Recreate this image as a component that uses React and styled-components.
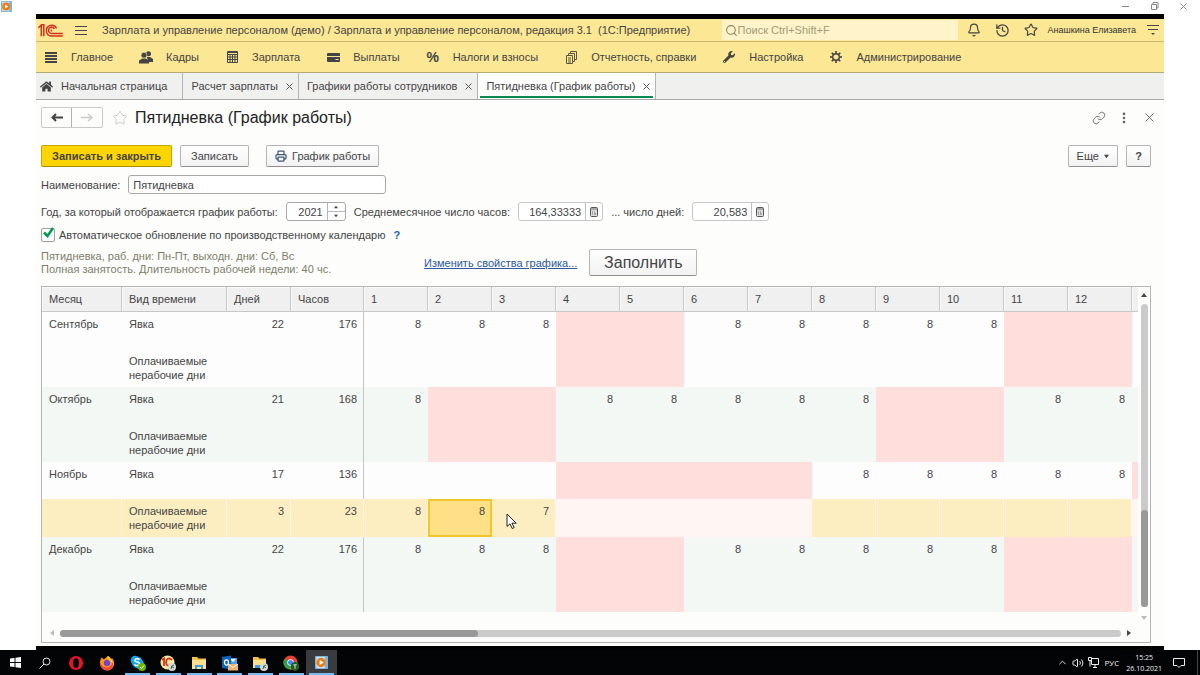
import React from "react";
import styled, { createGlobalStyle } from "styled-components";
import { Bell, History, Star, Link as LinkIcon, Search, X, MoreVertical, Printer, Volume2, ChevronUp } from "lucide-react";
import { FaWrench, FaHome } from "react-icons/fa";

const GlobalStyle = createGlobalStyle`
  * { box-sizing: border-box; }
  body {
    margin: 0;
    background: #fff;
    color: #444;
    font: 11px/14px "Liberation Sans", Arial, sans-serif;
  }
  button, input { font: inherit; color: inherit; }
  button { padding: 0; border: 0; background: none; cursor: pointer; }
  svg { display: block; flex: none; }
`;

const Screen = styled.div`
  display: flex;
  flex-direction: column;
  min-height: 100vh;
`;

const PlayerBar = styled.header`
  display: flex;
  align-items: center;
  justify-content: space-between;
  height: 14px;
  padding: 0 12px 1px 1px;
`;

const WindowButtons = styled.div`
  display: flex;
  gap: 20px;
  color: #888;
`;

const AppWindow = styled.div`
  display: flex;
  flex: 1;
  flex-direction: column;
  margin: 0 36px;
  border-top: 5px solid #000;
  border-bottom: 4px solid #000;
  background: #fdfdfb;
`;

const TitleBar = styled.div`
  display: flex;
  align-items: center;
  height: 23px;
  padding: 0 5px 0 2px;
  border-bottom: 1px solid #c9b673;
  background: #fce794;
`;

const AppTitle = styled.div`
  flex: 1;
  margin-left: 15px;
  white-space: nowrap;
`;

const MenuButton = styled.button`
  margin-left: ${(p) => p.$gap}px;
`;

const SearchBox = styled.label`
  display: flex;
  align-items: center;
  width: 236px;
  height: 20px;
  padding-left: 3px;
  background: #fef3c9;
  color: #8d8562;
  input {
    flex: 1;
    min-width: 0;
    padding: 0;
    border: 0;
    background: none;
    outline: 0;
  }
  input::placeholder { color: #a39b78; opacity: 1; }
`;

const HeaderTools = styled.div`
  display: flex;
  align-items: center;
  gap: 14px;
  margin-left: 9px;
`;

const UserName = styled.span`
  margin-left: 10px;
  font-size: 9px;
  color: #333;
  white-space: nowrap;
`;

const Sections = styled.nav`
  display: flex;
  align-items: center;
  gap: 27px;
  height: 31px;
  padding: 0 9px;
  border-bottom: 1px solid #b5a977;
  background: #fce794;
`;

const Section = styled.a`
  display: flex;
  align-items: center;
  gap: 14px;
  color: #444;
  text-decoration: none;
  white-space: nowrap;
`;

const IconSlot = styled.span`
  display: flex;
  justify-content: center;
  width: 12px;
  font-size: 14px;
  font-weight: bold;
`;

const Tabs = styled.div`
  display: flex;
  height: 27px;
  border-bottom: 1px solid #a9a9a9;
  background: #f0f0ef;
`;

const Tab = styled.div`
  display: flex;
  align-items: center;
  gap: 8px;
  padding: 0 ${(p) => (p.$home ? 15 : 5)}px 0 ${(p) => (p.$home ? 4 : 8)}px;
  border-right: 1px solid #b4b4b4;
  white-space: nowrap;
  ${(p) => p.$active && "background: linear-gradient(#0a8a50, #0a8a50) center 23px / calc(100% - 4px) 2px no-repeat #fff;"}
`;

const Form = styled.main`
  display: flex;
  flex: 1;
  flex-direction: column;
  padding: 7px 13px 3px 5px;
`;

const FormHeader = styled.div`
  display: flex;
  align-items: center;
  height: 21px;
  margin: 0 -6px 17px 0;
`;

const NavGroup = styled.div`
  display: flex;
  height: 21px;
  border: 1px solid #c9c9c9;
  border-radius: 2px;
`;

const NavButton = styled.button`
  display: flex;
  align-items: center;
  justify-content: center;
  width: 30px;
  color: ${(p) => (p.disabled ? "#ccc" : "#444")};
  border-right: ${(p) => (p.disabled ? 0 : 1)}px solid #b0b0b0;
`;

const FormTitle = styled.h1`
  flex: 1;
  margin: 0 0 0 7px;
  font-size: 16px;
  font-weight: normal;
  line-height: 20px;
  color: #222;
`;

const FormTools = styled.div`
  display: flex;
  align-items: center;
  gap: 11px;
  color: #666;
`;

const Row = styled.div`
  display: flex;
  align-items: center;
  gap: 8px;
  min-height: ${(p) => p.$height}px;
  margin-bottom: ${(p) => p.$after}px;
  white-space: nowrap;
`;

const Button = styled.button`
  display: flex;
  align-items: center;
  justify-content: center;
  gap: 5px;
  height: ${(p) => (p.$large ? 27 : 22)}px;
  min-width: ${(p) => p.$min || 0}px;
  padding: 0 ${(p) => (p.$narrow ? 8 : 10)}px;
  border: 1px solid ${(p) => (p.$primary ? "#c9a500" : "#b4b4b4")};
  border-bottom-color: ${(p) => (p.$primary ? "#a88a00" : "#8f8f8f")};
  border-radius: 2px;
  background: ${(p) => (p.$primary ? "#fed500" : "linear-gradient(#fff, #f2f2f2)")};
  font-size: ${(p) => (p.$large ? 16 : 11)}px;
  font-weight: ${(p) => (p.$primary || p.$strong ? "bold" : "normal")};
`;

const Spacer = styled.div`
  width: ${(p) => p.$width || 0}px;
  flex: ${(p) => (p.$width ? "none" : 1)};
`;

const Field = styled.div`
  display: flex;
  width: ${(p) => p.$width}px;
  height: 19px;
  border: 1px solid ${(p) => (p.$readOnly ? "#c8c8c8" : "#a8a8a8")};
  border-radius: 3px;
  background: #fff;
  overflow: hidden;
  input {
    flex: 1;
    min-width: 0;
    padding: 0 4px;
    border: 0;
    outline: 0;
    background: none;
    text-align: ${(p) => (p.$number ? "right" : "left")};
  }
`;

const FieldButton = styled.button`
  display: flex;
  align-items: center;
  justify-content: center;
  width: 17px;
  border-left: 1px solid #c0c0c0;
`;

const Stepper = styled.div`
  display: flex;
  flex-direction: column;
  width: 18px;
  border-left: 1px solid #b4b4b4;
  button {
    display: flex;
    flex: 1;
    align-items: center;
    justify-content: center;
  }
  button + button { border-top: 1px solid #b4b4b4; }
`;

const CheckLabel = styled.label`
  display: flex;
  align-items: center;
  gap: 4px;
`;

const Checkbox = styled.input`
  appearance: none;
  width: 14px;
  height: 14px;
  margin: 0;
  border: 1px solid #a0a0a0;
  border-radius: 2px;
  background: #fff;
`;

const CheckWrap = styled.span`
  position: relative;
  display: flex;
  svg {
    position: absolute;
    left: 1px;
    top: -2px;
    pointer-events: none;
  }
`;

const HelpLink = styled.a`
  color: #1666b0;
  font-weight: bold;
  text-decoration: none;
`;

const Summary = styled.p`
  width: 375px;
  margin: 0;
  line-height: 13px;
  color: #7d7d6c;
`;

const PropertiesLink = styled.a`
  margin-right: 4px;
  color: #2c5a9c;
`;

const Grid = styled.section`
  display: flex;
  flex: 1;
  flex-direction: column;
  border: 1px solid #b5b5b5;
`;

const GridBody = styled.div`
  display: flex;
  flex: 1;
`;

const TableViewport = styled.div`
  flex: 1;
  min-width: 0;
  overflow: hidden;
`;

const Table = styled.table`
  width: 1154px;
  table-layout: fixed;
  border-collapse: separate;
  border-spacing: 0;
`;

const HeadCell = styled.th`
  width: ${(p) => p.$width}px;
  height: 25px;
  padding: 0 7px;
  border-right: 1px solid #c6c6c6;
  border-bottom: 1px solid #c6c6c6;
  background: #f0f0f0;
  box-shadow: inset 1px 1px #fafafa;
  font-weight: normal;
  text-align: left;
`;

const fills = {
  plain: "#fdfdfd",
  alt: "#f4f8f4",
  off: "#ffdedb",
  selected: "#fdeec2",
  offSelected: "#fff5f3",
  current: "#fee087",
};

const outlines = {
  selected: "inset -1px 0 #fff8e6",
  current: "inset 0 0 0 2px #f2c52d",
};

const Cell = styled.td`
  position: relative;
  height: ${(p) => (p.$second ? 38 : 37)}px;
  padding: 5px 7px 0;
  background: ${(p) => fills[p.$fill]};
  box-shadow: ${(p) => (p.$divider ? "inset -1px 0 #c6c6c6" : outlines[p.$fill] || "none")};
  text-align: ${(p) => (p.$number ? "right" : "left")};
  vertical-align: top;
`;

const Pointer = styled.svg`
  position: absolute;
  left: 14px;
  top: 14px;
`;

const VerticalScroll = styled.div`
  display: flex;
  flex-direction: column;
  align-items: center;
  width: 12px;
  padding: 5px 0 3px;
`;

const VerticalTrack = styled.div`
  display: flex;
  flex: 1;
  flex-direction: column;
  justify-content: flex-end;
  width: 7px;
  margin: 6px 0 8px;
  border-radius: 4px;
  background: #cacaca;
`;

const VerticalThumb = styled.div`
  height: 32%;
  border-radius: 4px;
  background: #999;
`;

const HorizontalScroll = styled.div`
  display: flex;
  align-items: center;
  gap: 5px;
  height: 18px;
  padding: 0 18px 0 7px;
`;

const HorizontalTrack = styled.div`
  flex: 1;
  height: 7px;
  border-radius: 4px;
  background: #cacaca;
`;

const HorizontalThumb = styled.div`
  width: 39.4%;
  height: 7px;
  border-radius: 4px;
  background: #999;
`;

const TaskBar = styled.footer`
  display: flex;
  height: 25px;
  background: #030406;
  color: #eee;
`;

const SystemButton = styled.button`
  display: flex;
  align-items: center;
  justify-content: center;
  width: 30px;
`;

const TaskList = styled.div`
  display: flex;
  width: 276px;
  margin-left: 1px;
`;

const Task = styled.button`
  display: flex;
  flex: 1;
  align-items: center;
  justify-content: center;
  background:
    ${(p) => (p.$open ? "linear-gradient(#76b9ed, #76b9ed) center bottom / 25px 2px no-repeat" : "none")}
    ${(p) => (p.$active ? "#393b3e" : "transparent")};
`;

const Tray = styled.div`
  display: flex;
  align-items: center;
  gap: 4px;
  margin: 0 2px 0 auto;
  padding-right: 12px;
  border-right: 1px solid #44474a;
  font: 8px/11px "Open Sans", sans-serif;
`;

const Language = styled.span`
  margin: 0 3px 0 2px;
`;

const Clock = styled.time`
  margin-right: 7px;
  font-size: 7px;
  text-align: center;
`;

function Lines({ size = 12, count = 3, gap = 4, weight = 1 }) {
  return (
    <svg width={size} height={(count - 1) * gap + weight} stroke="#444" strokeWidth={weight}>
      {Array.from({ length: count }, (_, i) => (
        <path key={i} d={`M0 ${i * gap + weight / 2}h${size}`} />
      ))}
    </svg>
  );
}

function Logo() {
  return (
    <svg width="25" height="13" viewBox="0 0 25 13" fill="none" stroke="#d2301f" strokeWidth="1.5">
      <path d="M.3 3.800 3.300 1.200v11M2.800.8h3v11.400" />
      <path d="M18.500 4.500A5.300 5.300 0 1 0 13.300 12h11.500" />
      <path d="M16.300 5A3.100 3.100 0 1 0 13.300 9.500h11.500" />
      <circle cx="13.400" cy="6.500" r=".9" fill="#d2301f" stroke="none" />
    </svg>
  );
}

function PeopleIcon() {
  return (
    <svg width="14" height="13" viewBox="0 0 14 13" fill="#444">
      <circle cx="9.500" cy="2.800" r="2.500" />
      <path d="M8 6h3l3 2v3H9z" />
      <circle cx="5" cy="4.200" r="2.900" stroke="#fce794" strokeWidth=".6" />
      <path d="M0 12.500V9.500L3.500 7.500h3L10 9.500v3z" />
    </svg>
  );
}

function CalculatorIcon() {
  return (
    <svg width="11" height="12" viewBox="0 0 11 12" fill="none" stroke="#444">
      <path d="M.5.5h10v11H.5zM.5 1.500h10M.5 3.500h10M.5 6h10M.5 8.500h10M3 3v9M5.500 3v9M8 3v9" />
    </svg>
  );
}

function CardIcon() {
  return (
    <svg width="13" height="9" viewBox="0 0 13 9">
      <rect width="13" height="9" rx="1" fill="#444" />
      <path d="M0 3.500h13" stroke="#fce794" />
      <path d="M8.500 6.500h3" stroke="#fce794" />
    </svg>
  );
}

function ReportsIcon() {
  return (
    <svg width="11" height="13" viewBox="0 0 11 13" fill="none" stroke="#5b5440">
      <path d="M4.500 2.500V.5h6v8H9M2.500 4.500v-2H8.500v8H7M.5 4.500h6v8h-6zM2 7h3M2 9h3M2 11h3" />
    </svg>
  );
}

function GearIcon() {
  return (
    <svg width="12" height="12" viewBox="-6 -6 12 12" fill="none" stroke="#444">
      <circle r="3.300" strokeWidth="1.400" />
      {[0, 45, 90, 135, 180, 225, 270, 315].map((angle) => (
        <path key={angle} d="M0-3.800V-6" strokeWidth="1.700" transform={`rotate(${angle})`} />
      ))}
    </svg>
  );
}

function ArrowIcon({ flip }) {
  return (
    <svg width="12" height="9" viewBox="0 0 12 9" fill="none" stroke="currentColor" strokeWidth={flip ? 1.5 : 2}>
      <path d={flip ? "M0 4.500h10.500M7 1l3.800 3.500L7 8" : "M12 4.500H1.500M5 1 1.500 4.500 5 8"} />
    </svg>
  );
}

function FieldCalculator() {
  return (
    <svg width="8" height="10" viewBox="0 0 8 10" fill="none" stroke="#555">
      <rect x=".5" y=".5" width="7" height="9" rx="1" fill="#ddd" />
      <path d="M1 2h6M2 5h1M4 5h1M2 7h1M4 7h2" strokeWidth=".8" />
    </svg>
  );
}

const triangles = {
  up: "M0 5 3 1l3 4z",
  down: "M0 1h6L3 5z",
  left: "M5 0v6L1 3z",
  right: "M1 0v6l4-3z",
};

function Triangle({ dir, color = "#444", size = 6 }) {
  return (
    <svg width={size} height={size} viewBox="0 0 6 6" fill={color}>
      <path d={triangles[dir]} />
    </svg>
  );
}

function PlayerIcon({ size = 11 }) {
  return (
    <svg width={size} height={size} viewBox="0 0 14 14">
      <rect width="14" height="14" rx="1" fill="#7db4dc" />
      <rect x="1.500" y="1" width="9" height="12" fill="#cfe3f2" />
      <circle cx="6.500" cy="7" r="5" fill="#ee7d12" />
      <path d="M5 4.300v5.400L9.500 7z" fill="#fff" />
    </svg>
  );
}

function Badge({ color, children }) {
  return (
    <>
      <circle cx="12" cy="12" r="4" fill={color} />
      {children}
    </>
  );
}

function TaskIcon({ name }) {
  const art = {
    opera: (
      <path fillRule="evenodd" fill="#e5132b" d="M8 1a7 7 0 1 0 0 14A7 7 0 0 0 8 1zm0 2c1.900 0 3 2.300 3 5s-1.100 5-3 5-3-2.300-3-5 1.100-5 3-5z" />
    ),
    firefox: (
      <>
        <path fill="#ff9a1f" d="M1 8c0-3 1-4 1.500-5.500L5 4.500C6 2.500 8 3 8.500 1 10 1 11 3 11.500 4.500L13 3c2 2 2.500 5 2 7-1 3.500-4 5.500-7 5.500S1 12 1 8z" />
        <path fill="#f5433e" d="M1 7c1 2 2 5.500 6.500 5.500S13 9 13.500 7c1.500 4-1 8.300-5.500 8.300S.5 11.500 1 7z" />
        <circle cx="8" cy="8" r="3.200" fill="#7445c9" />
        <path fill="#ffcf3a" d="M9 1c2 1 4 3.500 4.200 6.500L10.500 6C10 4 8.500 3 9 1z" />
      </>
    ),
    skype: (
      <>
        <circle cx="5" cy="5" r="4.300" fill="#12a5e8" />
        <circle cx="9" cy="9" r="5" fill="#12a5e8" />
        <circle cx="7" cy="7" r="5.500" fill="#12a5e8" />
        <path d="M9.500 4.800C8.500 3.300 4.800 3.400 4.800 5.400c0 2.100 4.900 1.300 4.900 3.500 0 2-4.100 2.200-5.200.4" fill="none" stroke="#fff" strokeWidth="1.600" />
        <Badge color="#6bb700"><path d="m10 12 1.500 1.500 2.500-3" fill="none" stroke="#fff" /></Badge>
      </>
    ),
    onec: (
      <>
        <circle cx="7.500" cy="7.500" r="7" fill="#fbe9a0" />
        <path d="m2 5 2-1.500V11M12 5C9 2 6 4 6 7.500S8.500 11 12 10.500" fill="none" stroke="#d9311f" strokeWidth="1.800" />
        <Badge color="#d5d8d5"><path d="m11 14 1-3 2-1M11 11l3 2" stroke="#3d6b45" fill="none" /></Badge>
      </>
    ),
    folder: (
      <>
        <path d="M1 2h5l1.500 1.500H15V14H1z" fill="#f2c14e" />
        <path d="M1 5h14v9H1z" fill="#fde08d" />
        <path d="M4 14v-4h8v4h-2v-2H6v2z" fill="#3f9be0" />
      </>
    ),
    outlook: (
      <>
        <path d="M7 3h8v8H7z" fill="#4ea0e6" />
        <path d="M8 4h6l-3 3z" fill="#fff" />
        <path d="m0 2 9-1.500v14L0 13z" fill="#0b64b8" />
        <ellipse cx="4.500" cy="7.500" rx="2" ry="2.600" fill="none" stroke="#fff" strokeWidth="1.300" />
        <path d="M6 9h10v6.500H6z" fill="#f5b06b" />
        <path d="m6 9 5 3.500L16 9" fill="none" stroke="#fff" />
      </>
    ),
    folder2: (
      <>
        <path d="M1 2h5l1.500 1.500H14V13H1z" fill="#f2c14e" />
        <path d="M1 5h13v8H1z" fill="#fde08d" />
        <path d="M3 13v-3h6v3z" fill="#3f9be0" />
        <Badge color="#d5d8d5"><path d="m11 14 1-3 2-1M11 11l3 2" stroke="#3d6b45" fill="none" /></Badge>
      </>
    ),
    chrome: (
      <>
        <circle cx="7.500" cy="7.500" r="7" fill="#e34133" />
        <path d="M7.500 7.500 1.400 4A7 7 0 0 0 7.500 14.500z" fill="#2ba24c" />
        <path d="M7.500 7.500h7a7 7 0 0 1-7 7z" fill="#fbc116" />
        <circle cx="7.500" cy="7.500" r="3.200" fill="#fff" />
        <circle cx="7.500" cy="7.500" r="2.500" fill="#4285f4" />
        <circle cx="12" cy="11.500" r="4.400" fill="#1d5c2a" />
        <path d="M10.300 9.800h3.400M12 9.800v4" stroke="#cfe0cf" />
      </>
    ),
  };
  return <svg width="16" height="16" viewBox="0 0 16 16">{art[name]}</svg>;
}

const sections = [
  ["Главное", <Lines count={4} gap={3} weight={2} />],
  ["Кадры", <PeopleIcon />],
  ["Зарплата", <CalculatorIcon />],
  ["Выплаты", <CardIcon />],
  ["Налоги и взносы", "%"],
  ["Отчетность, справки", <ReportsIcon />],
  ["Настройка", <FaWrench size={12} />],
  ["Администрирование", <GearIcon />],
];

const tabs = ["Расчет зарплаты", "Графики работы сотрудников", "Пятидневка (График работы)"];

const columns = [["Месяц", 80], ["Вид времени", 105], ["Дней", 64], ["Часов", 73]];
const days = Array.from({ length: 13 }, (_, i) => i + 1);

const months = [
  { name: "Сентябрь", total: [22, 176], work: [1, 2, 3, 6, 7, 8, 9, 10], off: [4, 5, 11, 12] },
  { name: "Октябрь", total: [21, 168], work: [1, 4, 5, 6, 7, 8, 11, 12], off: [2, 3, 9, 10], alt: true },
  {
    name: "Ноябрь",
    total: [17, 136],
    work: [8, 9, 10, 11, 12],
    off: [4, 5, 6, 7, 13],
    paid: { total: [3, 23], hours: { 1: 8, 2: 8, 3: 7 }, current: 2, pointer: 3 },
  },
  { name: "Декабрь", total: [22, 176], work: [1, 2, 3, 6, 7, 8, 9, 10], off: [4, 5, 11, 12], alt: true },
];

function MonthRows({ month }) {
  const base = month.alt ? "alt" : "plain";
  const paid = month.paid;
  const paidBase = paid ? "selected" : base;
  const paidFill = (day) => {
    if (paid && paid.current === day) return "current";
    if (month.off.includes(day)) return paid ? "offSelected" : "off";
    return paidBase;
  };
  return (
    <tbody>
      <tr>
        <Cell $fill={base}>{month.name}</Cell>
        <Cell $fill={base}>Явка</Cell>
        <Cell $fill={base} $number>{month.total[0]}</Cell>
        <Cell $fill={base} $number $divider>{month.total[1]}</Cell>
        {days.map((day) => (
          <Cell key={day} $number $fill={month.off.includes(day) ? "off" : base}>
            {month.work.includes(day) ? 8 : null}
          </Cell>
        ))}
      </tr>
      <tr>
        <Cell $second $fill={paidBase} />
        <Cell $second $fill={paidBase}>Оплачиваемые нерабочие дни</Cell>
        <Cell $second $fill={paidBase} $number>{paid?.total[0]}</Cell>
        <Cell $second $fill={paidBase} $number $divider={!paid}>{paid?.total[1]}</Cell>
        {days.map((day) => (
          <Cell key={day} $second $number $fill={paidFill(day)}>
            {paid?.hours[day]}
            {paid?.pointer === day && (
              <Pointer width="12" height="17" viewBox="0 0 12 17" fill="#fff" stroke="#222">
                <path d="M1 1v12.500l3-2.700 2.200 4.700 2-.9L6 10.200h4.200z" />
              </Pointer>
            )}
          </Cell>
        ))}
      </tr>
    </tbody>
  );
}

export default function App() {
  return (
    <Screen>
      <GlobalStyle />
      <PlayerBar>
        <PlayerIcon />
        <WindowButtons>
          <button aria-label="Свернуть"><svg width="9" height="9" stroke="currentColor"><path d="M1 4.500h7" /></svg></button>
          <button aria-label="Восстановить"><svg width="9" height="9" fill="none" stroke="currentColor"><path d="M1.500 2.500h5v5h-5zM3 2V.5h5V6H7" /></svg></button>
          <button aria-label="Закрыть"><svg width="9" height="9" stroke="currentColor"><path d="m1.500 1.500 6 6m0-6-6 6" /></svg></button>
        </WindowButtons>
      </PlayerBar>

      <AppWindow>
        <TitleBar>
          <Logo />
          <MenuButton $gap={12} aria-label="Меню"><Lines /></MenuButton>
          <AppTitle>Зарплата и управление персоналом (демо) / Зарплата и управление персоналом, редакция 3.1&nbsp; (1С:Предприятие)</AppTitle>
          <SearchBox>
            <Search size={13} strokeWidth={2} />
            <input aria-label="Поиск" placeholder="Поиск Ctrl+Shift+F" />
          </SearchBox>
          <HeaderTools>
            <button aria-label="Уведомления"><Bell size={14} color="#444" /></button>
            <button aria-label="История"><History size={15} color="#444" /></button>
            <button aria-label="Избранное"><Star size={14} color="#444" /></button>
          </HeaderTools>
          <UserName>Анашкина Елизавета</UserName>
          <MenuButton $gap={11} aria-label="Настройки окна">
            <svg width="12" height="12" stroke="#444"><path d="M0 1.500h12M1 5.500h10" /><path d="M4 9h4l-2 2z" fill="#444" stroke="none" /></svg>
          </MenuButton>
        </TitleBar>

        <Sections>
          {sections.map(([label, icon]) => (
            <Section key={label} href="#">
              <IconSlot>{icon}</IconSlot>
              {label}
            </Section>
          ))}
        </Sections>

        <Tabs>
          <Tab $home><FaHome size={13} />Начальная страница</Tab>
          {tabs.map((label, i) => (
            <Tab key={label} $active={i === 2}>
              {label}
              <button aria-label="Закрыть вкладку"><svg width="7" height="7" stroke="#555"><path d="m.5.5 6 6m0-6-6 6" /></svg></button>
            </Tab>
          ))}
        </Tabs>

        <Form>
          <FormHeader>
            <NavGroup>
              <NavButton aria-label="Назад"><ArrowIcon /></NavButton>
              <NavButton aria-label="Вперед" disabled><ArrowIcon flip /></NavButton>
            </NavGroup>
            <MenuButton $gap={9} aria-label="В избранное"><Star size={16} strokeWidth={1.5} color="#ccc" /></MenuButton>
            <FormTitle>Пятидневка (График работы)</FormTitle>
            <FormTools>
              <button aria-label="Ссылка"><LinkIcon size={14} strokeWidth={1.5} /></button>
              <button aria-label="Действия"><MoreVertical size={14} strokeWidth={2.5} /></button>
              <button aria-label="Закрыть"><X size={15} strokeWidth={1.5} /></button>
            </FormTools>
          </FormHeader>

          <Row $height={22} $after={8}>
            <Button $primary>Записать и закрыть</Button>
            <Button>Записать</Button>
            <Spacer $width={1} />
            <Button $narrow><Printer size={12} strokeWidth={2.5} color="#3c5a78" />График работы</Button>
            <Spacer />
            <Button $narrow>Еще<Triangle dir="down" size={5} /></Button>
            <Button $narrow $strong $min={25}>?</Button>
          </Row>

          <Row $height={19} $after={8}>
            <label htmlFor="name">Наименование:</label>
            <Field $width={258}><input id="name" defaultValue="Пятидневка" /></Field>
          </Row>

          <Row $height={19} $after={7}>
            <label htmlFor="year">Год, за который отображается график работы:</label>
            <Field $width={60} $number>
              <input id="year" defaultValue="2021" />
              <Stepper>
                <button aria-label="Больше"><Triangle dir="up" size={4} /></button>
                <button aria-label="Меньше"><Triangle dir="down" size={4} /></button>
              </Stepper>
            </Field>
            <label htmlFor="hours">Среднемесячное число часов:</label>
            <Field $width={85} $number $readOnly>
              <input id="hours" defaultValue="164,33333" />
              <FieldButton aria-label="Калькулятор часов"><FieldCalculator /></FieldButton>
            </Field>
            <label htmlFor="days">... число дней:</label>
            <Field $width={77} $number $readOnly>
              <input id="days" defaultValue="20,583" />
              <FieldButton aria-label="Калькулятор дней"><FieldCalculator /></FieldButton>
            </Field>
          </Row>

          <Row $height={14} $after={7}>
            <CheckLabel>
              <CheckWrap>
                <Checkbox type="checkbox" defaultChecked />
                <svg width="13" height="13" fill="none" stroke="#009a55" strokeWidth="2.500"><path d="m2 6.500 3.500 3.500L11 2" /></svg>
              </CheckWrap>
              Автоматическое обновление по производственному календарю
            </CheckLabel>
            <HelpLink href="#">?</HelpLink>
          </Row>

          <Row $height={27} $after={10}>
            <Summary>
              Пятидневка, раб. дни: Пн-Пт, выходн. дни: Сб, Вс<br />
              Полная занятость. Длительность рабочей недели: 40 чс.
            </Summary>
            <PropertiesLink href="#">Изменить свойства графика...</PropertiesLink>
            <Button $large $min={108}>Заполнить</Button>
          </Row>

          <Grid>
            <GridBody>
              <TableViewport>
                <Table>
                  <thead>
                    <tr>
                      {columns.map(([label, width]) => <HeadCell key={label} $width={width}>{label}</HeadCell>)}
                      {days.map((day) => <HeadCell key={day} $width={64}>{day < 13 ? day : null}</HeadCell>)}
                    </tr>
                  </thead>
                  {months.map((month) => <MonthRows key={month.name} month={month} />)}
                </Table>
              </TableViewport>
              <VerticalScroll>
                <Triangle dir="up" />
                <VerticalTrack><VerticalThumb /></VerticalTrack>
                <Triangle dir="down" color="#bbb" />
              </VerticalScroll>
            </GridBody>
            <HorizontalScroll>
              <Triangle dir="left" color="#bbb" />
              <HorizontalTrack><HorizontalThumb /></HorizontalTrack>
              <Triangle dir="right" />
            </HorizontalScroll>
          </Grid>
        </Form>
      </AppWindow>

      <TaskBar>
        <SystemButton aria-label="Пуск">
          <svg width="11" height="11" fill="#fff"><path d="M0 1.500 4.500 1v4H0zM5.500.8 11 0v5H5.500zM0 6h4.500v4L0 9.500zM5.500 6H11v5l-5.500-.8z" /></svg>
        </SystemButton>
        <SystemButton aria-label="Поиск в Windows">
          <svg width="12" height="12" fill="none" stroke="#eee"><circle cx="7.500" cy="4.500" r="3.500" /><path d="m5 7-4.500 4.500" /></svg>
        </SystemButton>
        <TaskList>
          {["opera", "firefox"].map((name) => <Task key={name} aria-label={name}><TaskIcon name={name} /></Task>)}
          {["skype", "onec", "folder", "outlook", "folder2", "chrome"].map((name) => (
            <Task key={name} $open aria-label={name}><TaskIcon name={name} /></Task>
          ))}
          <Task $open $active aria-label="Видео"><PlayerIcon size={13} /></Task>
        </TaskList>
        <Tray>
          <ChevronUp size={11} />
          <Volume2 size={12} />
          <svg width="11" height="11" fill="none" stroke="#eee"><path d="M3.500 1.500h7v6h-7zM.5.5h3v3h-3zM2 3.500v6M5 10.500h4M7 8v2" /></svg>
          <Language>РУС</Language>
          <Clock>15:25<br />26.10.2021</Clock>
          <svg width="12" height="12" fill="none" stroke="#eee"><path d="M.5 1.500h11v7H8l-2 2-2-2H.5z" /></svg>
        </Tray>
      </TaskBar>
    </Screen>
  );
}
